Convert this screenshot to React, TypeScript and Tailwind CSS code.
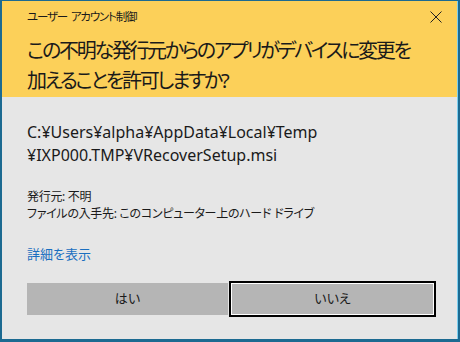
import React from "react";

const jp = "font-['Noto_Sans','Noto_Sans_CJK_JP',sans-serif] [font-feature-settings:'palt']";

const App: React.FC = () => {
	return (
		<div className={`w-[460px] h-[342px] bg-[#1c6a91] pt-px pl-[2px] pr-[2px] pb-[3px] ${jp}`}>
			<div className="h-full flex flex-col border-r border-[#7ccff0]">
				<div className="bg-[#fcd059] h-[96px] pl-[25px] pr-[14px] pt-[7px]">
					<div className="flex items-center justify-between h-[18px]">
						<span className="text-[11.5px] leading-[18px] tracking-[-1.2px] text-[#1a1a1a]">
							ユーザー<span className="ml-[4px]">アカウント制御</span>
						</span>
						<svg width="12" height="12" viewBox="0 0 12 12" className="mr-[1px]">
							<path d="M0.5 0.5 L11.5 11.5 M11.5 0.5 L0.5 11.5" stroke="#222" strokeWidth="1" fill="none" />
						</svg>
					</div>
					<p className="mt-[10px] text-[20px] leading-[30px] tracking-[-2.3px] whitespace-nowrap text-[#1a1a1a]">
						この不明な発行元からのアプリがデバイスに変更を
						<br />
						加えることを許可しますか?
					</p>
				</div>
				<div className="flex-1 bg-[#e6e6e6] pl-[25px] pt-[24px]">
					<p className="text-[16px] leading-[23px] text-[#1a1a1a] whitespace-nowrap">
						C:¥Users¥alpha¥AppData¥Local¥Temp
						<br />
						¥IXP000.TMP¥VRecoverSetup.msi
					</p>
					<div className="mt-[21px] text-[12px] leading-[17px] tracking-[-0.3px] text-[#1a1a1a]">
						<p>発行元: 不明</p>
						<p>
							ファイルの入手先: このコンピューター上のハード<span className="ml-[3px]">ドライブ</span>
						</p>
					</div>
					<p className="mt-[23px] text-[13px] leading-[18px] text-[#1a6fc0]">詳細を表示</p>
					<div className="mt-[18px] flex items-center">
						<button className="w-[201px] h-[32px] bg-[#b5b5b5] text-[13px] text-[#1a1a1a]">はい</button>
						<button className="ml-px w-[207px] h-[36px] bg-[#b5b5b5] border-2 border-black shadow-[inset_0_0_0_1px_#ffffff] text-[13px] text-[#1a1a1a]">
							いいえ
						</button>
					</div>
				</div>
			</div>
		</div>
	);
};

export default App;
